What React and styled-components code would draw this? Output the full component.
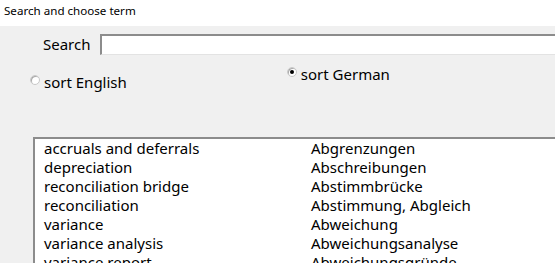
import React from "react";
import styled, { createGlobalStyle } from "styled-components";

const Global = createGlobalStyle`
  html, body { margin: 0; padding: 0; background: #f0f0f0; overflow: hidden; }
  body { font-family: "Noto Sans", "Open Sans", sans-serif; color: #000; }
`;

const Window = styled.div`
  width: 555px;
  height: 263px;
  display: flex;
  flex-direction: column;
  overflow: hidden;
`;

const TitleBar = styled.div`
  height: 26px;
  flex: none;
  background: #ffffff;
  display: flex;
  align-items: flex-start;
  padding: 3px 0 0 4px;
  box-sizing: border-box;
  font-size: 11.6px;
  line-height: 16px;
`;

const Body = styled.div`
  flex: 1;
  background: #f0f0f0;
  display: flex;
  flex-direction: column;
  padding-top: 8px;
  min-height: 0;
`;

const SearchRow = styled.div`
  display: flex;
  align-items: center;
  padding-left: 43px;
  gap: 10px;
  height: 21px;
  flex: none;
`;

const Label = styled.span`
  font-size: 15px;
  line-height: 21px;
`;

const Input = styled.input`
  flex: 1;
  height: 21px;
  box-sizing: border-box;
  background: #fff;
  border: none;
  border-top: 2px solid #8c8c8c;
  border-left: 2px solid #8c8c8c;
  border-bottom: 1px solid #e3e3e3;
  margin-right: -4px;
  outline: none;
  padding: 0 2px;
  font: inherit;
`;

const RadioRow = styled.div`
  display: flex;
  height: 82px;
  flex: none;
`;

const RadioOption = styled.label`
  display: flex;
  align-items: center;
  gap: 4px;
  height: 18px;
  font-size: 15px;
  margin-left: ${(p) => p.$left}px;
  margin-top: ${(p) => p.$top}px;
`;

const RadioDot = styled.span`
  width: 10px;
  height: 10px;
  box-sizing: border-box;
  border-radius: 50%;
  background: #fff;
  border: 1px solid #c8c8c8;
  box-shadow: inset 1px 1px 0 #a8a8a8;
  display: flex;
  align-items: center;
  justify-content: center;
  margin-top: ${(p) => p.$lift}px;
  &::after {
    content: "";
    width: 4px;
    height: 4px;
    border-radius: 50%;
    background: ${(p) => (p.$checked ? "#000" : "transparent")};
  }
`;

const ListBox = styled.div`
  margin-left: 33px;
  margin-right: -10px;
  flex: 1;
  min-height: 0;
  background: #fff;
  border-top: 2px solid #8c8c8c;
  border-left: 2px solid #8c8c8c;
  overflow: hidden;
`;

const Row = styled.div`
  display: grid;
  grid-template-columns: 267px 1fr;
  padding-left: 9px;
  height: 19px;
  line-height: 19px;
  font-size: 15px;
  white-space: nowrap;
`;

const terms = [
  ["accruals and deferrals", "Abgrenzungen"],
  ["depreciation", "Abschreibungen"],
  ["reconciliation bridge", "Abstimmbrücke"],
  ["reconciliation", "Abstimmung, Abgleich"],
  ["variance", "Abweichung"],
  ["variance analysis", "Abweichungsanalyse"],
  ["variance report", "Abweichungsgründe"],
];

export default function App() {
  return (
    <Window>
      <Global />
      <TitleBar>Search and choose term</TitleBar>
      <Body>
        <SearchRow>
          <Label>Search</Label>
          <Input />
        </SearchRow>
        <RadioRow>
          <RadioOption $left={30} $top={18}>
            <RadioDot $lift={-5} />
            <span>sort English</span>
          </RadioOption>
          <RadioOption $left={160} $top={10}>
            <RadioDot $lift={-4} $checked />
            <span>sort German</span>
          </RadioOption>
        </RadioRow>
        <ListBox>
          {terms.map(([en, de]) => (
            <Row key={en}>
              <span>{en}</span>
              <span>{de}</span>
            </Row>
          ))}
        </ListBox>
      </Body>
    </Window>
  );
}
